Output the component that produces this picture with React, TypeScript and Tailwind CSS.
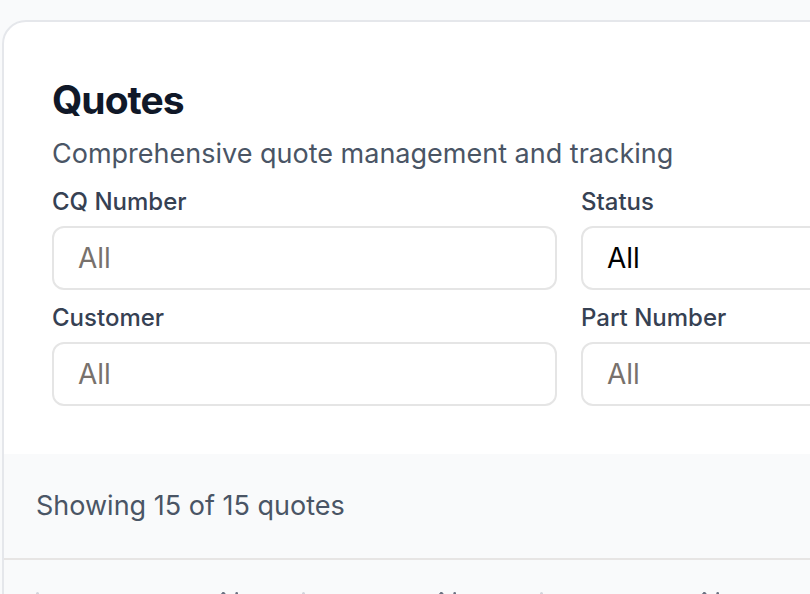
import { ArrowUpDown } from "lucide-react";

const fieldClass =
  "h-16 w-full appearance-none rounded-xl border-2 border-[#e5e5e5] bg-white px-6 text-[28px] leading-10 outline-none placeholder:text-[#78716c]";

function Field({ id, label, options }: { id: string; label: string; options?: string[] }) {
  return (
    <div className="flex flex-col gap-2">
      <label htmlFor={id} className="text-2xl leading-8 font-medium text-gray-700">
        {label}
      </label>
      {options ? (
        <select id={id} className={fieldClass + " text-black"}>
          {options.map((option) => (
            <option key={option}>{option}</option>
          ))}
        </select>
      ) : (
        <input id={id} type="text" placeholder="All" className={fieldClass} />
      )}
    </div>
  );
}

const columns = [
  { label: "CQ Number", width: "w-[266px]", lead: "w-[178px]" },
  { label: "Status", width: "w-[238px]", lead: "w-[130px]" },
  { label: "Customer", width: "w-[264px]", lead: "w-[155px]" },
];

export default function App() {
  return (
    <div className="h-screen overflow-hidden bg-gray-50 pt-5 font-['Inter',sans-serif]">
      <main className="ml-0.5 w-[140%] overflow-hidden rounded-3xl border-2 border-gray-200 bg-white">
        <section className="px-12 pt-12 pb-12">
          <h1 className="text-[39px] leading-[60px] font-bold tracking-tight text-gray-900">Quotes</h1>
          <p className="mt-1 text-[27px] leading-10 text-gray-600">
            Comprehensive quote management and tracking
          </p>
          <div className="mt-3 grid grid-cols-2 gap-x-6 gap-y-3">
            <Field id="cq-number" label="CQ Number" />
            <Field id="status" label="Status" options={["All", "Open", "Closed"]} />
            <Field id="customer" label="Customer" />
            <Field id="part-number" label="Part Number" />
          </div>
        </section>
        <section className="bg-gray-50">
          <p className="px-8 py-8 text-[27px] leading-10 text-gray-600">Showing 15 of 15 quotes</p>
          <table className="w-full table-fixed border-t-2 border-stone-200">
            <thead>
              <tr className="h-[88px]">
                {columns.map((column) => (
                  <th key={column.label} className={column.width + " pl-8 text-left"}>
                    <button
                      type="button"
                      aria-label={"Sort by " + column.label}
                      className="flex items-start text-gray-500"
                    >
                      <span className={column.lead + " shrink-0 pt-1"}>
                        <span className="block h-1 w-[3px] rounded-full bg-gray-300" />
                      </span>
                      <ArrowUpDown className="size-8 shrink-0" />
                    </button>
                  </th>
                ))}
                <th />
              </tr>
            </thead>
          </table>
        </section>
      </main>
    </div>
  );
}
